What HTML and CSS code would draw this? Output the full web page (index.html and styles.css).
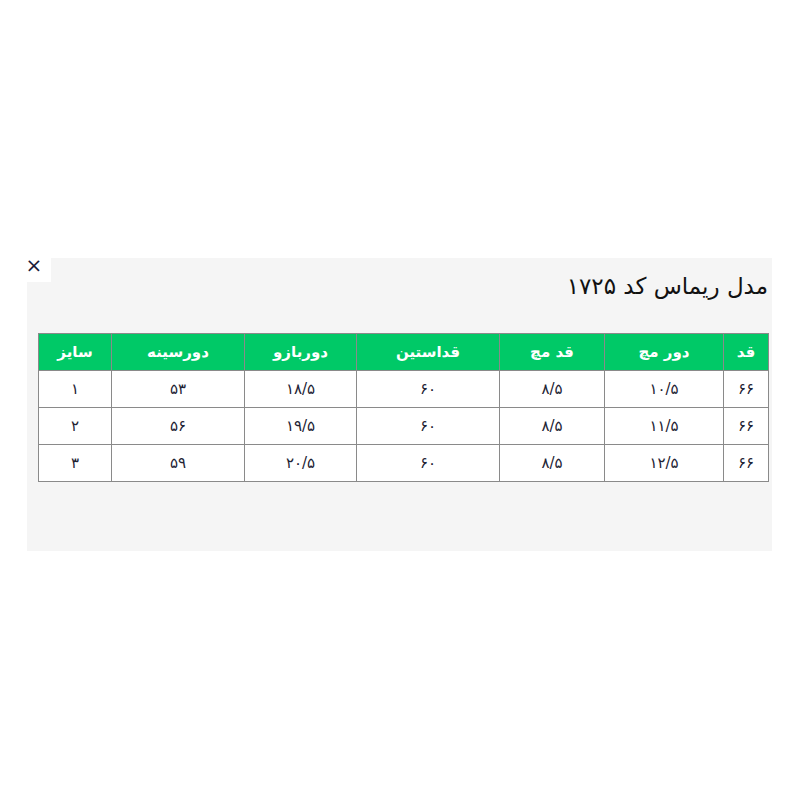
FILE: index.html
```html
<!DOCTYPE html>
<html lang="fa">
<head>
<meta charset="utf-8">
<title>جدول سایز</title>
<link rel="stylesheet" href="styles.css">
</head>
<body>
<div class="panel" dir="rtl">
  <button class="close" type="button">×</button>
  <h2 class="title">مدل ریماس کد ۱۷۲۵</h2>
  <table class="size-table">
    <colgroup>
      <col class="c-qad">
      <col class="c-dour-moch">
      <col class="c-qad-moch">
      <col class="c-qad-astin">
      <col class="c-dour-bazu">
      <col class="c-dour-sine">
      <col class="c-size">
    </colgroup>
    <thead>
      <tr>
        <th>قد</th>
        <th>دور مچ</th>
        <th>قد مچ</th>
        <th>قداستین</th>
        <th>دوربازو</th>
        <th>دورسینه</th>
        <th>سایز</th>
      </tr>
    </thead>
    <tbody>
      <tr>
        <td>۶۶</td>
        <td>۱۰/۵</td>
        <td>۸/۵</td>
        <td>۶۰</td>
        <td>۱۸/۵</td>
        <td>۵۳</td>
        <td>۱</td>
      </tr>
      <tr>
        <td>۶۶</td>
        <td>۱۱/۵</td>
        <td>۸/۵</td>
        <td>۶۰</td>
        <td>۱۹/۵</td>
        <td>۵۶</td>
        <td>۲</td>
      </tr>
      <tr>
        <td>۶۶</td>
        <td>۱۲/۵</td>
        <td>۸/۵</td>
        <td>۶۰</td>
        <td>۲۰/۵</td>
        <td>۵۹</td>
        <td>۳</td>
      </tr>
    </tbody>
  </table>
</div>
</body>
</html>
```
FILE: styles.css
```css
html, body {
  margin: 0;
  padding: 0;
  background: #ffffff;
}

body {
  font-family: "DejaVu Sans", "Noto Sans", sans-serif;
}

.panel {
  position: relative;
  box-sizing: border-box;
  width: 745px;
  height: 293px;
  margin: 258px 0 0 27px;
  padding: 12px 4px 0 11px;
  background: #f5f5f5;
}

.close {
  position: absolute;
  left: -10px;
  top: -10px;
  width: 34px;
  height: 34px;
  padding: 0;
  border: 0;
  background: #ffffff;
  color: #1b1b3a;
  font-family: "DejaVu Sans", sans-serif;
  font-size: 20px;
  line-height: 34px;
  text-align: center;
  cursor: pointer;
}

.title {
  margin: 0;
  font-size: 23px;
  font-weight: normal;
  line-height: 32px;
  color: #111111;
  text-align: right;
}

.size-table {
  width: 730px;
  margin: 31px -1px 0 0;
  border-collapse: collapse;
  table-layout: fixed;
  background: #ffffff;
}

.c-qad { width: 45px; }
.c-dour-moch { width: 119px; }
.c-qad-moch { width: 105px; }
.c-qad-astin { width: 143px; }
.c-dour-bazu { width: 112px; }
.c-dour-sine { width: 133px; }
.c-size { width: 73px; }

.size-table th,
.size-table td {
  padding: 0 4px;
  border: 1px solid #8a8a8a;
  text-align: center;
  vertical-align: middle;
  box-sizing: border-box;
}

.size-table th {
  height: 37px;
  background: #00c967;
  color: #ffffff;
  font-size: 15px;
  font-weight: bold;
}

.size-table td {
  height: 37px;
  color: #222233;
  font-size: 15px;
}
```
